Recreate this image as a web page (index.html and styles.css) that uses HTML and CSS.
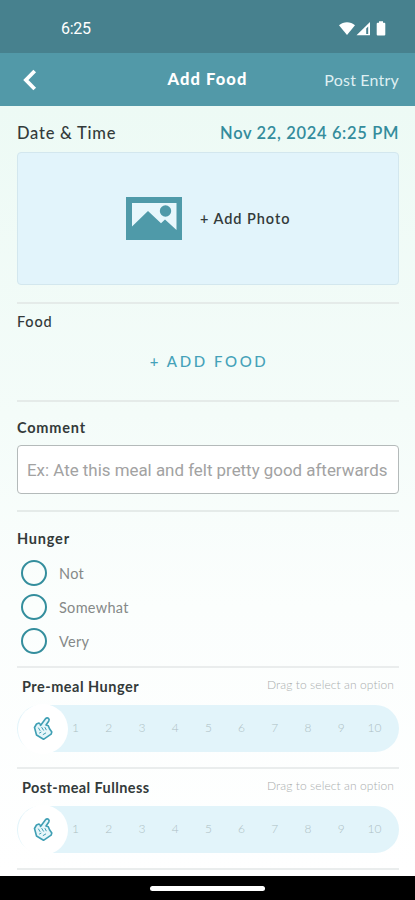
FILE: index.html
```html
<!DOCTYPE html>
<html lang="en">
<head>
    <meta charset="UTF-8">
    <meta name="viewport" content="width=device-width, initial-scale=1.0">
    <title>Add Food</title>
    <link rel="stylesheet" href="styles.css">
</head>
<body>
    <!-- Status bar -->
    <div class="status-bar">
        <span class="clock">6:25</span>
        <svg class="status-icons" width="48" height="16" viewBox="0 0 48 16" fill="#fff">
            <path d="M0 4.2C4.5 0.2 11.5 0.2 16 4.2L8 14z"/>
            <path fill-rule="evenodd" d="M17.5 14.3L31 1v13.3zM27.2 7.4v5.6h2V5.4z"/>
            <path d="M40 0.3h4v1.5h1.3a1 1 0 0 1 1 1v10.7a1 1 0 0 1-1 1h-6.600a1 1 0 0 1-1-1V2.800a1 1 0 0 1 1-1H40z"/>
        </svg>
    </div>

    <!-- Header -->
    <header class="header">
        <svg class="back" width="14" height="22" viewBox="0 0 14 22">
            <path d="M11.7 2L2.9 11l8.8 9" fill="none" stroke="#fff" stroke-width="3.800"/>
        </svg>
        <h1>Add Food</h1>
        <span class="post">Post Entry</span>
    </header>

    <main>
        <div class="date-row">
            <span class="date-label">Date &amp; Time</span>
            <span class="date-value">Nov 22, 2024 6:25 PM</span>
        </div>
        <div class="photo">
            <svg width="56" height="43" viewBox="0 0 56 43">
                <path fill="#4f9aa9" d="M0 0h56v43H0z"/>
                <path fill="#e7f7fc" d="M6 6h44.500v27L39 22.500l-4 3.700L22 14 6 29.500z"/>
                <circle cx="39.500" cy="14" r="5.700" fill="#4f9aa9"/>
            </svg>
            <span class="photo-text">+ Add Photo</span>
        </div>

        <section class="food">
            <h2 class="light">Food</h2>
            <div class="add-food">+ ADD FOOD</div>
        </section>

        <section class="comment">
            <h2>Comment</h2>
            <input class="comment-input" type="text" placeholder="Ex: Ate this meal and felt pretty good afterwards">
        </section>

        <section class="hunger">
            <h2>Hunger</h2>
            <div class="option"><span class="radio"></span><span>Not</span></div>
            <div class="option"><span class="radio"></span><span>Somewhat</span></div>
            <div class="option"><span class="radio"></span><span>Very</span></div>
        </section>

        <section class="scale">
            <div class="scale-head">
                <h2>Pre-meal Hunger</h2>
                <span class="hint">Drag to select an option</span>
            </div>
            <div class="track">
                <div class="thumb">
                    <svg width="20" height="25" viewBox="0 0 20 25" fill="none" stroke="#3f9fb4" stroke-width="1.600" stroke-linejoin="round" stroke-linecap="round">
                        <path fill="#e6f6fa" d="M7.500 9.500L12.500 2.700q1.600-1.500 3-.3 1.200 1.300.2 2.800L13 9l2.300.7 1.200 3 2.300 3.300-.7 2.200L10.500 23.300 3.500 19 1.500 11.500 3.500 8l2.500-1 1.500 1.500z"/>
                        <path stroke-width="1" d="M5.500 12l1.500 2.500M8.800 11.500l1.700 2.700M12 11.500l1.200 2.300M6.500 17l1.500-.8M10.200 18.500l2.500-1.500"/>
                    </svg>
                </div>
                <div class="numbers">
                    <span>1</span><span>2</span><span>3</span><span>4</span><span>5</span><span>6</span><span>7</span><span>8</span><span>9</span><span>10</span>
                </div>
            </div>
        </section>

        <section class="scale">
            <div class="scale-head">
                <h2 class="fullness">Post-meal Fullness</h2>
                <span class="hint">Drag to select an option</span>
            </div>
            <div class="track">
                <div class="thumb">
                    <svg width="20" height="25" viewBox="0 0 20 25" fill="none" stroke="#3f9fb4" stroke-width="1.600" stroke-linejoin="round" stroke-linecap="round">
                        <path fill="#e6f6fa" d="M7.500 9.500L12.500 2.700q1.600-1.500 3-.3 1.200 1.300.2 2.800L13 9l2.300.7 1.200 3 2.300 3.300-.7 2.200L10.500 23.300 3.500 19 1.500 11.500 3.500 8l2.500-1 1.500 1.500z"/>
                        <path stroke-width="1" d="M5.500 12l1.500 2.500M8.800 11.500l1.700 2.700M12 11.500l1.200 2.300M6.500 17l1.500-.8M10.200 18.500l2.500-1.500"/>
                    </svg>
                </div>
                <div class="numbers">
                    <span>1</span><span>2</span><span>3</span><span>4</span><span>5</span><span>6</span><span>7</span><span>8</span><span>9</span><span>10</span>
                </div>
            </div>
        </section>
        <div class="end-line"></div>
    </main>

    <!-- Navigation bar -->
    <div class="nav-bar"><span class="nav-pill"></span></div>
</body>
</html>
```
FILE: styles.css
```css
* {
    box-sizing: border-box;
}
body {
    margin: 0;
    height: 900px;
    display: flex;
    flex-direction: column;
    overflow: hidden;
    font-family: Lato, sans-serif;
    color: #333a3a;
    background-color: #fff;
}
h1, h2 {
    margin: 0;
    white-space: nowrap;
}
svg {
    display: block;
    flex: none;
}
.status-bar {
    height: 53px;
    padding: 4px 28px 0 61px;
    display: flex;
    align-items: center;
    justify-content: space-between;
    background-color: #47818e;
    color: #fff;
}
.clock {
    font-family: Roboto, sans-serif;
    font-size: 16px;
    letter-spacing: -0.3px;
}
.header {
    height: 53px;
    padding: 0 16px 0 23px;
    display: grid;
    grid-template-columns: 96px 1fr 103px;
    align-items: center;
    background-color: #5299a8;
    color: #fff;
}
.header h1 {
    padding-bottom: 1px;
    font-size: 16.5px;
    font-weight: 900;
    letter-spacing: 1.1px;
    text-align: center;
}
.post {
    padding-bottom: 1px;
    font-size: 16px;
    letter-spacing: 0.2px;
    text-align: right;
    color: #deeff2;
    white-space: nowrap;
}
main {
    height: 770px;
    padding: 0 16px 0 17px;
    background: linear-gradient(#edfaf5, #f4fcf9 40%, #fbfefd 65%, #fff);
}
.date-row {
    height: 46px;
    padding-top: 8px;
    display: flex;
    align-items: center;
    justify-content: space-between;
    font-size: 16.5px;
    font-weight: 500;
    white-space: nowrap;
}
.date-label {
    letter-spacing: 0.75px;
}
.date-value {
    color: #348c9c;
    letter-spacing: 0.65px;
    font-weight: 600;
}
.photo {
    height: 133px;
    margin-bottom: 17px;
    padding-left: 108px;
    display: flex;
    align-items: center;
    gap: 18px;
    background-color: #e2f4fb;
    border: 1px solid #d3e7ee;
    border-radius: 4px;
}
.photo-text {
    font-size: 14.5px;
    font-weight: 600;
    letter-spacing: 0.95px;
}
section {
    border-top: 2px solid #e5ebe9;
}
h2 {
    font-size: 14.5px;
    line-height: 20px;
    font-weight: 700;
    letter-spacing: 0.8px;
}
h2.light {
    font-weight: 500;
}
.scale-head h2 {
    letter-spacing: 0.5px;
}
.scale-head .fullness {
    letter-spacing: 0.4px;
}
.food {
    height: 98px;
    padding-top: 8px;
}
.add-food {
    margin-top: 19px;
    padding-left: 2px;
    font-size: 15px;
    line-height: 20px;
    font-weight: 500;
    letter-spacing: 2.6px;
    text-align: center;
    color: #45a2b9;
}
.comment {
    height: 110px;
    padding-top: 16px;
}
.comment-input {
    display: block;
    width: 100%;
    height: 49px;
    margin-top: 7px;
    padding: 0 9px;
    border: 1px solid #b4baba;
    border-radius: 4px;
    background-color: #fff;
    font-family: Roboto, sans-serif;
    font-size: 16.9px;
}
.comment-input::placeholder {
    color: #a2a2a2;
}
.hunger {
    height: 156px;
    padding-top: 17px;
}
.hunger h2 {
    margin-bottom: 7px;
}
.option {
    height: 34px;
    padding-left: 4px;
    display: flex;
    align-items: center;
    gap: 12px;
    font-size: 14.5px;
    letter-spacing: 0.3px;
    color: #858988;
}
.radio {
    width: 26px;
    height: 26px;
    border: 2px solid #348e9d;
    border-radius: 50%;
}
.scale {
    height: 101px;
    padding-top: 9px;
    border-color: #eaeded;
}
.scale-head {
    height: 28px;
    padding: 0 5px;
    display: flex;
    justify-content: space-between;
}
.hint {
    font-size: 12px;
    line-height: 16px;
    font-weight: 300;
    letter-spacing: 0.1px;
    color: #aaaeae;
    white-space: nowrap;
}
.track {
    height: 47px;
    display: flex;
    align-items: center;
    border-radius: 24px;
    background-color: #e2f4fa;
}
.thumb {
    width: 50px;
    height: 50px;
    margin-left: 1px;
    flex: none;
    display: flex;
    align-items: center;
    justify-content: center;
    border-radius: 50%;
    background-color: #fff;
}
.numbers {
    width: 332px;
    margin-left: -9px;
    padding-bottom: 2px;
    display: grid;
    grid-template-columns: repeat(10, 1fr);
    text-align: center;
    font-size: 12px;
    font-weight: 300;
    color: #adbfc4;
}
.end-line {
    height: 2px;
    background-color: #eaeded;
}
.nav-bar {
    height: 24px;
    display: flex;
    align-items: center;
    justify-content: center;
    background-color: #000;
}
.nav-pill {
    width: 115px;
    height: 5px;
    border-radius: 3px;
    background-color: #fff;
}
```
